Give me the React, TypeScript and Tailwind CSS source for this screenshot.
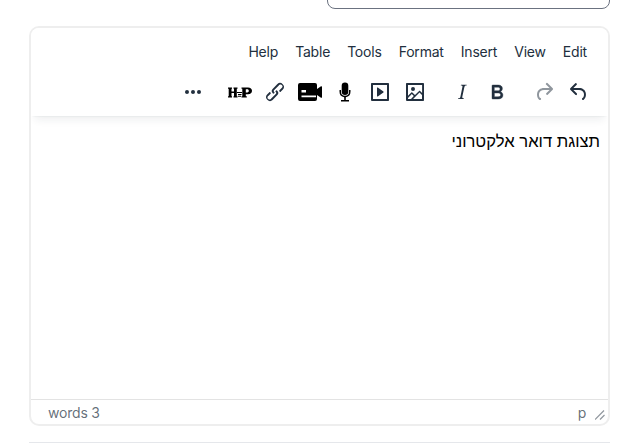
const ink = "#222f3e";

function Icon({ d, heavy }: { d: string; heavy?: boolean }) {
  return (
    <svg
      viewBox="0 0 24 24"
      className="w-6 h-6"
      fill="currentColor"
      fillRule="evenodd"
      stroke={heavy ? "currentColor" : "none"}
      strokeWidth={heavy ? 0.4 : 0}
    >
      <path d={d} />
    </svg>
  );
}

const icons = {
  undo: "M6.4 8H12c3.7 0 6.2 2 6.8 5.1.6 2.7-.4 5.6-2.3 6.8a1 1 0 0 1-1-1.8c1.1-.6 1.8-2.7 1.4-4.6-.5-2.1-2.1-3.5-4.9-3.5H6.4l3.3 3.3a1 1 0 1 1-1.4 1.4l-5-5a1 1 0 0 1 0-1.4l5-5a1 1 0 0 1 1.4 1.4L6.4 8Z",
  redo: "M17.6 10H12c-2.8 0-4.4 1.4-4.9 3.5-.4 2 .3 4 1.4 4.6a1 1 0 1 1-1 1.8c-2-1.2-2.9-4.1-2.3-6.8.6-3 3-5.1 6.8-5.1h5.6l-3.3-3.3a1 1 0 1 1 1.4-1.4l5 5a1 1 0 0 1 0 1.4l-5 5a1 1 0 0 1-1.4-1.4l3.3-3.3Z",
  bold: "M7.8 19c-.3 0-.5 0-.6-.2l-.2-.5V5.7c0-.2 0-.4.2-.5l.6-.2h5c1.5 0 2.7.3 3.5 1 .7.6 1.1 1.4 1.1 2.5a3 3 0 0 1-.6 1.9c-.4.6-1 1-1.6 1.2.4.1.9.3 1.3.6s.8.7 1 1.2c.3.4.4 1 .4 1.6 0 1.3-.4 2.3-1.3 3-.8.7-2.1 1-3.8 1H7.8Zm5-8.3c.6 0 1.2-.1 1.6-.5.4-.3.6-.7.6-1.3 0-1.1-.8-1.7-2.3-1.7H9.3v3.5h3.4Zm.5 6c.7 0 1.3-.1 1.7-.4.4-.4.6-.9.6-1.5s-.2-1-.7-1.4c-.4-.3-1-.4-2-.4H9.4v3.8h4Z",
  italic: "M16.7 4.7l-.1.9h-.3c-.6 0-1 0-1.4.3-.3.3-.4.6-.5 1.1l-2.1 9.8v.6c0 .5.4.8 1.4.8h.2l-.2.8H8l.2-.8h.2c1.1 0 1.8-.5 2-1.5l2-9.8.1-.5c0-.6-.4-.8-1.4-.8h-.3l.2-.9h5.8Z",
  image: "M5 15.7l3.3-3.2c.3-.3.7-.3 1 0L12 15l4.1-4c.3-.4.8-.4 1 0l2 1.9V5H5v10.7ZM5 18V19h3l2.8-2.9-2-2L5 17.9Zm14-3l-2.5-2.4-6.4 6.5H19v-4ZM4 3h16c.6 0 1 .4 1 1v16c0 .6-.4 1-1 1H4a1 1 0 0 1-1-1V4c0-.6.4-1 1-1Zm6 8a2 2 0 1 1 0-4 2 2 0 0 1 0 4Z",
  media: "M4 3h16c.6 0 1 .4 1 1v16c0 .6-.4 1-1 1H4a1 1 0 0 1-1-1V4c0-.6.4-1 1-1Zm1 2v14h14V5H5Zm4.8 2.6l5.6 4a.5.5 0 0 1 0 .8l-5.6 4A.5.5 0 0 1 9 16V8a.5.5 0 0 1 .8-.4Z",
  link: "M6.2 12.3a1 1 0 0 1 1.4 1.4l-2 2a2 2 0 1 0 2.6 2.8l4.8-4.8a1 1 0 0 0 0-1.4 1 1 0 1 1 1.4-1.3 2.9 2.9 0 0 1 0 4L9.6 20a3.9 3.9 0 0 1-5.5-5.5l2-2Zm11.6-.6a1 1 0 0 1-1.4-1.4l2-2a2 2 0 1 0-2.6-2.8L11 10.3a1 1 0 0 0 0 1.4A1 1 0 1 1 9.6 13a2.9 2.9 0 0 1 0-4L14.4 4a3.9 3.9 0 0 1 5.5 5.5l-2 2Z",
  more: "M6 10a2 2 0 0 0-2 2c0 1.1.9 2 2 2a2 2 0 0 0 2-2 2 2 0 0 0-2-2Zm12 0a2 2 0 0 0-2 2c0 1.1.9 2 2 2a2 2 0 0 0 2-2 2 2 0 0 0-2-2Zm-6 0a2 2 0 0 0-2 2c0 1.1.9 2 2 2a2 2 0 0 0 2-2 2 2 0 0 0-2-2Z",
};

function Btn({ children, muted }: { children: React.ReactNode; muted?: boolean }) {
  return (
    <div className={`w-[35px] h-6 flex items-center justify-center ${muted ? "opacity-50" : ""}`}>{children}</div>
  );
}

function H5pIcon() {
  return (
    <svg viewBox="0 0 24 11" className="w-6 h-[11px]" fill="#000">
      <path d="M0 .5h4v1.300h-.5v2.700h2.500V1.800h-.5V.5h4v1.300h-.7v7.400h.7v1.300h-4V9.200h.5V6H3.500v3.200H4v1.300H0V9.200h.7V1.800H0Z" />
      <path d="M13.500.5h6.500c2.500 0 4 1.300 4 3.300s-1.500 3.400-4 3.400h-2.200v2h1v1.300h-5.300V9.200h.8V1.800h-.8Zm4.300 1.700v3.300h1.500c.9 0 1.500-.6 1.500-1.650s-.6-1.650-1.500-1.650Z" />
      <path d="M9 5h5v1H9Zm1 2h3.500v.9H10Zm0 1.800h3v.9h-3Z" />
    </svg>
  );
}

function VideoIcon() {
  return (
    <svg viewBox="0 0 24 18" className="w-6 h-[18px]" fill="#000">
      <path
        fillRule="evenodd"
        d="M2 0h15a2 2 0 0 1 2 2v14a2 2 0 0 1-2 2H2a2 2 0 0 1-2-2V2a2 2 0 0 1 2-2ZM3.500 7v2.500h4.500V7ZM3.500 12.500v1.700h14.500v-1.700Z"
      />
      <path d="M19 6 23 3.300c.4-.3 1-.1 1 .5v10.400c0 .6-.6.800-1 .5L19 12Z" />
    </svg>
  );
}

function MicIcon() {
  return (
    <svg viewBox="0 0 14 20" className="w-[14px] h-5" fill="#000">
      <rect x="3.700" y="0.500" width="6.600" height="12.500" rx="3.300" />
      <path d="M1.500 8v1.800A5.500 5.500 0 0 0 6.200 15.200V18H3v1.500h8V18H7.800v-2.800a5.500 5.500 0 0 0 4.700-5.400V8H11v1.800a4 4 0 0 1-8 0V8Z" />
    </svg>
  );
}

export default function App() {
  return (
    <div className="w-[635px] h-[448px] bg-white overflow-hidden font-['Inter',sans-serif] pl-[29px]" style={{ color: ink }}>
      <div className="w-[581px] h-[9px] overflow-hidden flex justify-end items-end">
        <div className="w-[283px] h-8 rounded-[8px] border border-[#6b7280] bg-white shrink-0" />
      </div>
      <div className="mt-[17px] h-[400px] w-[581px] rounded-[10px] border-2 border-[#eeeeee] flex flex-col overflow-hidden">
        <div className="h-[88px] shrink-0 bg-white shadow-[0_2px_2px_-2px_rgba(34,47,62,0.1),0_8px_8px_-4px_rgba(34,47,62,0.07)] z-10 flex flex-col">
          <div dir="rtl" className="flex items-center h-[24px] mt-[12px] pr-[21px] gap-[17px] text-[14px] leading-6 tracking-[-0.2px]">
            <span>Edit</span>
            <span>View</span>
            <span>Insert</span>
            <span>Format</span>
            <span>Tools</span>
            <span>Table</span>
            <span>Help</span>
          </div>
          <div dir="rtl" className="flex items-center h-6 mt-[16px] pr-[12px]">
            <Btn><Icon d={icons.undo} /></Btn>
            <Btn muted><Icon d={icons.redo} /></Btn>
            <div className="w-[12px]" />
            <Btn><Icon d={icons.bold} heavy /></Btn>
            <Btn><Icon d={icons.italic} /></Btn>
            <div className="w-[12px]" />
            <Btn><Icon d={icons.image} /></Btn>
            <Btn><Icon d={icons.media} /></Btn>
            <Btn><MicIcon /></Btn>
            <Btn><VideoIcon /></Btn>
            <Btn><Icon d={icons.link} /></Btn>
            <Btn><H5pIcon /></Btn>
            <div className="w-[12px]" />
            <Btn><Icon d={icons.more} /></Btn>
          </div>
        </div>
        <div dir="rtl" className="flex-1 min-h-0 px-[8px] pt-[14px] text-[16.600px] leading-[24px] text-black font-['Liberation_Sans',sans-serif]">
          תצוגת דואר אלקטרוני
        </div>
        <div className="h-[25px] shrink-0 border-t border-[#e3e3e3] flex items-center justify-between pl-[17px] pr-[3px] text-[14px] tracking-[-0.2px] text-[rgba(34,47,62,0.7)]">
          <span>words 3</span>
          <div className="flex items-center gap-[9px]">
            <span>p</span>
            <svg viewBox="0 0 10 10" className="w-[10px] h-[10px] mt-[5px]" stroke="rgba(34,47,62,0.5)" strokeWidth="1.200">
              <path d="M0 9.500 9 .5M5 9.500 9.500 5" />
            </svg>
          </div>
        </div>
      </div>
      <div className="mt-[16px] border-t border-[#e5e7eb] w-[581px]" />
    </div>
  );
}
